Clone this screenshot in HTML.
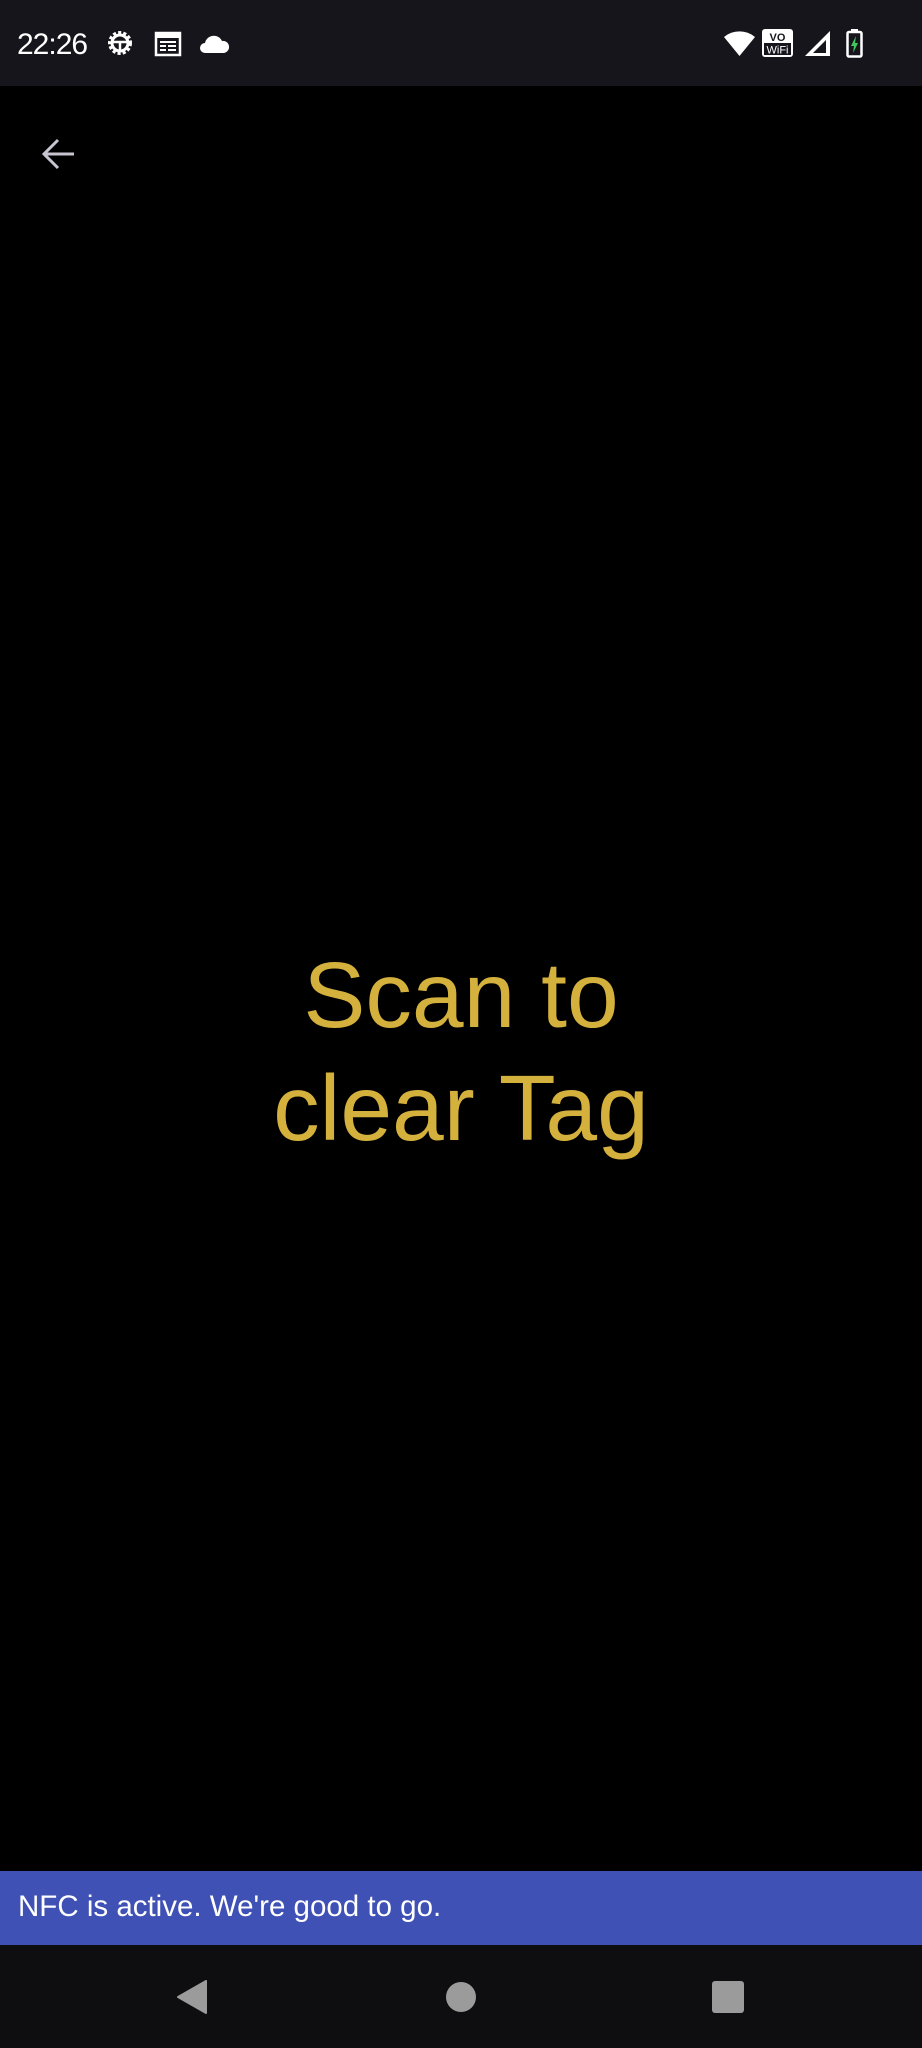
<!DOCTYPE html>
<html><head><meta charset="utf-8"><style>
html,body{margin:0;padding:0;width:922px;height:2048px;background:#000;overflow:hidden;font-family:"Liberation Sans",sans-serif}
.sb{position:absolute;left:0;top:0;width:922px;height:86px;background:#16151b}
.t{position:absolute;left:17px;top:28px;font-size:30px;color:#fff;letter-spacing:-1px}
.main{position:absolute;left:0;width:922px;text-align:center;color:#d4b03c;font-size:93px;line-height:113px;top:939px}
.snack{position:absolute;left:0;top:1871px;width:922px;height:74px;background:#3f51b5}
.snack span{position:absolute;left:18px;top:19px;font-size:29.5px;color:#fff}
.nav{position:absolute;left:0;top:1945px;width:922px;height:103px;background:#0e0e10}
</style></head><body>
<div class="sb">
<div class="t">22:26</div>
<svg style="position:absolute;left:104px;top:27px" width="32" height="32" viewBox="0 0 32 32"><circle cx="16" cy="16" r="10" fill="none" stroke="#fff" stroke-width="4" stroke-dasharray="3 2"/><circle cx="16" cy="16" r="8" fill="none" stroke="#fff" stroke-width="3"/><path d="M8 15h16M16 15v10" stroke="#fff" stroke-width="2.5"/></svg>
<svg style="position:absolute;left:154px;top:31px" width="28" height="26" viewBox="0 0 28 26"><rect x="2" y="2" width="24" height="22" fill="none" stroke="#fff" stroke-width="2.5"/><rect x="2" y="2" width="24" height="5" fill="#fff"/><path d="M6 11h16M6 15h6M14 15h8M14 19h8M6 19h6" stroke="#fff" stroke-width="2"/></svg>
<svg style="position:absolute;left:199px;top:32px" width="31" height="22" viewBox="0 0 31 22"><path d="M6 21a5 5 0 0 1 0-10a9 9 0 0 1 17-2a6 6 0 0 1 2 12z" fill="#fff"/></svg>
<svg style="position:absolute;left:723px;top:29px" width="33" height="28" viewBox="0 0 33 28"><path d="M16.5 27L1 8a24 24 0 0 1 31 0z" fill="#fff"/></svg>
<svg style="position:absolute;left:762px;top:29px" width="31" height="28" viewBox="0 0 31 28"><rect x="0" y="0" width="31" height="28" rx="3" fill="#fff"/><text x="15.5" y="12" font-size="11" font-weight="bold" text-anchor="middle" fill="#16151b" font-family="Liberation Sans">VO</text><rect x="2" y="14" width="27" height="12" fill="#16151b"/><text x="15.5" y="24.5" font-size="11" text-anchor="middle" fill="#fff" font-family="Liberation Sans">WiFi</text></svg>
<svg style="position:absolute;left:804px;top:30px" width="27" height="27" viewBox="0 0 27 27"><path d="M26 1V26H1z" fill="#fff"/><path d="M22 10V23H9z" fill="#16151b"/></svg>
<svg style="position:absolute;left:846px;top:29px" width="17" height="29" viewBox="0 0 17 29"><rect x="5" y="0" width="7" height="3" fill="#fff"/><rect x="1.5" y="3" width="14" height="24.5" rx="1.5" fill="none" stroke="#fff" stroke-width="2.5"/><path d="M10 7L5 17h3l-1 7 5-10H9z" fill="#3ec95c"/></svg>
</div>
<svg style="position:absolute;left:40px;top:136px" width="36" height="36" viewBox="0 0 36 36"><path d="M34 18H5M18 4L4 18l14 14" fill="none" stroke="#c8c4d0" stroke-width="3"/></svg>
<div class="main">Scan to<br>clear Tag</div>
<div class="snack"><span>NFC is active. We're good to go.</span></div>
<div class="nav">
<svg style="position:absolute;left:176px;top:35px" width="32" height="34" viewBox="0 0 32 34"><path d="M30 1V33L2 17z" fill="#9b9b9b" stroke="#9b9b9b" stroke-width="2" stroke-linejoin="round"/></svg>
<div style="position:absolute;left:446px;top:37px;width:30px;height:30px;border-radius:50%;background:#9b9b9b"></div>
<div style="position:absolute;left:712px;top:36px;width:32px;height:32px;border-radius:3px;background:#9b9b9b"></div>
</div>
</body></html>
